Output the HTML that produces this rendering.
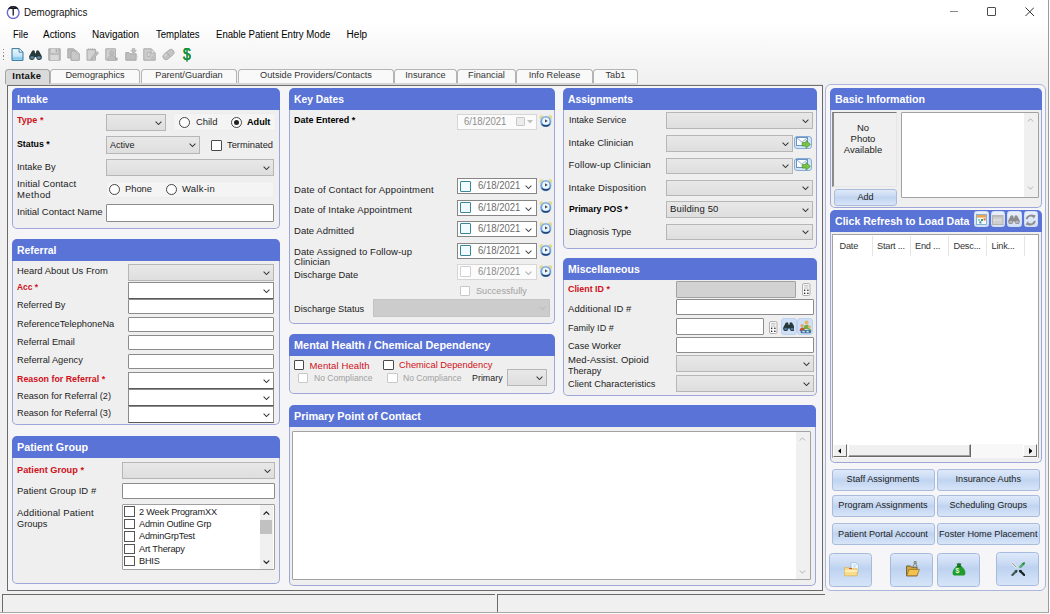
<!DOCTYPE html><html><head><meta charset="utf-8"><title>Demographics</title><style>
*{box-sizing:border-box;margin:0;padding:0}
html,body{width:1050px;height:614px;overflow:hidden;background:#f0f0f0}
body{position:relative;font-family:"Liberation Sans",sans-serif;font-size:9.5px;color:#1a1a1a}
.a{position:absolute}
.t{position:absolute;white-space:nowrap;line-height:12px;font-size:9.5px;color:#1c1c1c}
.b{font-weight:bold;color:#000;transform:scaleX(.94);transform-origin:0 50%}
.r{color:#d01020}
.g{color:#a0a0a0}
.pn{position:absolute;border-radius:5px;background:#efefef}
.pb{position:absolute;left:0;right:0;bottom:0;border:1px solid #9fa7d8;border-top:none;border-radius:0 0 5px 5px}
.ph{position:absolute;left:0;top:0;right:0;height:22px;border-radius:5px 5px 0 0;background:#5a73d6;color:#fff;font-weight:bold;font-size:11.5px;line-height:21px;padding-left:4.7px;white-space:nowrap}
.ph span{display:inline-block;transform:scaleX(.925);transform-origin:0 50%}
.cb{position:absolute;background:linear-gradient(#e8e8e8,#dedede);border:1px solid #b6b6b6}
.cb.w{background:#fff;border-color:#8c8c8c;border-bottom-color:#5a5a5a}
.cb.d{background:#cccccc;border-color:#c4c4c4}
.cb svg{position:absolute;right:3px;top:50%;margin-top:-1.5px}
.cb span{position:absolute;left:3px;top:50%;margin-top:-6px;line-height:12px;white-space:nowrap}
.tb{position:absolute;background:#fff;border:1px solid #8c8c8c;border-radius:1px}
.tb.d{background:#d2d2d2;border-color:#a2a2a2}
.ck{position:absolute;width:11px;height:11px;background:#fff;border:1px solid #4a4a4a;border-radius:1px}
.ck.d{border-color:#c8c8c8}
.rd{position:absolute;width:11px;height:11px;border-radius:50%;background:#fff;border:1px solid #444}
.rd i{position:absolute;left:2px;top:2px;width:5px;height:5px;border-radius:50%;background:#222}
.bt{position:absolute;border:1px solid #a9bcdd;border-radius:3px;background:linear-gradient(#dfe9fa 0%,#d0dff5 30%,#c0d4f0 50%,#cbdcf4 75%,#d8e5f8 100%);text-align:center;white-space:nowrap;color:#222;font-size:9.15px}
.gb{position:absolute;background:#f4f4f4;border:1px solid #ececec}
.dp{position:absolute;background:#fff;border:1px solid #868686}
.dp.d{background:#fbfbfb;border-color:#d6d6d6}
.dp .ck{left:2px;top:2px;border-color:#3a8798;background:#f0fcff}
.dp.d .ck{border-color:#d0d0d0;background:#fff}
.dp span{position:absolute;top:50%;margin-top:-6px;line-height:12px;font-size:10px;transform:scaleX(.953);transform-origin:0 50%;color:#6c6c6c;white-space:nowrap}
.dp.d span{color:#8e8e8e}
.dp svg{position:absolute;right:4px;top:50%;margin-top:-1px}
.tab{position:absolute;top:68.8px;height:14px;border:1px solid #b4b4b4;border-bottom:none;border-radius:3.5px 3.5px 0 0;background:#f9f9f9;text-align:center;font-size:9.2px;line-height:11.5px;color:#333;white-space:nowrap}
</style></head><body>
<div class="a" style="left:0;top:0;width:1050px;height:23px;background:#fff"></div>
<div class="t" style="left:24px;top:6.5px;font-size:10.4px;color:#111;transform:scaleX(.945);transform-origin:0 50%">Demographics</div>
<svg class="a" style="left:6px;top:4.5px" width="14.5" height="14.5" viewBox="0 0 14.5 14.5"><circle cx="7.2" cy="7.6" r="5.9" fill="#fff" stroke="#6a6bd2" stroke-width="1.4"/><path d="M2.6 3.9 A5.9 5.9 0 0 1 11.8 3.9" fill="none" stroke="#151515" stroke-width="1.5"/><path d="M4.2 3.4 H10.2 M7.2 3.4 V10.6" fill="none" stroke="#151515" stroke-width="1.3"/></svg>
<div class="a" style="left:950px;top:11px;width:8px;height:1px;background:#8c8c8c"></div>
<div class="a" style="left:987px;top:7px;width:9px;height:9px;border:1px solid #4c4c4c;border-radius:1px"></div>
<svg class="a" style="left:1024.5px;top:7px" width="9.5" height="9.5" viewBox="0 0 9.5 9.5"><path d="M0.5 0.5 L9 9 M9 0.5 L0.5 9" stroke="#333" stroke-width="1" fill="none"/></svg>
<div class="a" style="left:0;top:23px;width:1050px;height:62px;background:linear-gradient(#ffffff 0%,#f8f8f8 40%,#f0f0f0 95%)"></div>
<div class="t" style="left:12.5px;top:28.5px;font-size:10px;color:#000;transform:scaleX(0.944);transform-origin:0 50%">File</div>
<div class="t" style="left:43.3px;top:28.5px;font-size:10px;color:#000;transform:scaleX(0.994);transform-origin:0 50%">Actions</div>
<div class="t" style="left:92.2px;top:28.5px;font-size:10px;color:#000;transform:scaleX(0.994);transform-origin:0 50%">Navigation</div>
<div class="t" style="left:156.3px;top:28.5px;font-size:10px;color:#000;transform:scaleX(0.958);transform-origin:0 50%">Templates</div>
<div class="t" style="left:216px;top:28.5px;font-size:10px;color:#000;transform:scaleX(0.961);transform-origin:0 50%">Enable Patient Entry Mode</div>
<div class="t" style="left:346.6px;top:28.5px;font-size:10px;color:#000;transform:scaleX(1);transform-origin:0 50%">Help</div>
<div class="a" style="left:3px;top:48.5px;width:1px;height:1.4px;background:#8a8a8a"></div>
<div class="a" style="left:3px;top:51.9px;width:1px;height:1.4px;background:#8a8a8a"></div>
<div class="a" style="left:3px;top:55.3px;width:1px;height:1.4px;background:#8a8a8a"></div>
<div class="a" style="left:3px;top:58.7px;width:1px;height:1.4px;background:#8a8a8a"></div>
<svg class="a" style="left:10.5px;top:48px" width="13" height="13" viewBox="0 0 13 13"><defs><linearGradient id="nd" x1="0" y1="0" x2="0" y2="1"><stop offset="0" stop-color="#eef7fd"/><stop offset=".65" stop-color="#c4e4f8"/><stop offset=".8" stop-color="#7cc6ee"/><stop offset="1" stop-color="#bfe4f8"/></linearGradient></defs><path d="M1 0.6 H8.3 L12 4 V12.4 H1Z" fill="url(#nd)" stroke="#34789c" stroke-width="1"/><path d="M8.1 0.8 V4.2 H11.8" fill="#f4fbff" stroke="#256b8e" stroke-width=".8"/></svg>
<svg class="a" style="left:29px;top:49.5px" width="13" height="10" viewBox="0 0 13 10"><path d="M3 0.9 Q4.6 -0.2 5.7 1 L6.1 3.3 Q6.5 3 6.9 3.3 L7.3 1 Q8.4 -0.2 10 0.9 L12.7 6 Q13.5 9.9 10 9.9 Q7.4 9.9 7.2 7 L5.8 7 Q5.6 9.9 3 9.9 Q-0.5 9.9 0.3 6Z" fill="#28393b"/><ellipse cx="3.1" cy="7.6" rx="1.9" ry="1.3" fill="#5d88a8"/><ellipse cx="9.9" cy="7.6" rx="1.9" ry="1.3" fill="#5d88a8"/></svg>
<svg class="a" style="left:48px;top:48px" width="13" height="13" viewBox="0 0 13 13"><path d="M0.8 0.8 H12.2 V12.2 H0.8Z" fill="#bdbdbd" stroke="#a9a9a9"/><rect x="3" y="0.8" width="7" height="4" fill="#d6d6d6"/><rect x="7.6" y="1.2" width="1.6" height="2.8" fill="#a9a9a9"/><rect x="2.4" y="7" width="8.2" height="5" fill="#d9d9d9"/></svg>
<svg class="a" style="left:66.7px;top:48px" width="13" height="13" viewBox="0 0 13 13"><path d="M0.8 0.8 H6.5 L9 3 V10 H0.8Z" fill="#bdbdbd" stroke="#a9a9a9"/><path d="M4 3 H9.5 L12.3 5.6 V12.3 H4Z" fill="#c9c9c9" stroke="#a9a9a9"/><path d="M9.3 3.2 V5.8 H12" fill="#dcdcdc" stroke="#a9a9a9" stroke-width=".7"/></svg>
<svg class="a" style="left:85.7px;top:48px" width="13" height="13" viewBox="0 0 13 13"><path d="M1 1.4 H9.4 V12.2 H1Z" fill="#d2d2d2" stroke="#a9a9a9"/><path d="M2.5 0.4 V2.4 M4.5 0.4 V2.4 M6.5 0.4 V2.4 M8.2 0.4 V2.4" stroke="#a9a9a9" stroke-width=".8"/><path d="M5.4 9.8 L10.8 3.4 L12.6 5 L7.2 11.2 L4.9 12Z" fill="#bdbdbd" stroke="#a9a9a9" stroke-width=".7"/></svg>
<svg class="a" style="left:105px;top:48px" width="13" height="13" viewBox="0 0 13 13"><path d="M0.8 0.8 H10.4 V12 H0.8Z" fill="#cfcfcf" stroke="#a9a9a9"/><circle cx="6.8" cy="5" r="2.3" fill="#bdbdbd" stroke="#a9a9a9" stroke-width=".6"/><path d="M2.6 12.4 Q3 7.6 6.8 7.6 Q10.8 7.6 11.2 12.4Z" fill="#bdbdbd" stroke="#a9a9a9" stroke-width=".6"/><rect x="10.2" y="9.6" width="2.4" height="2.8" fill="#a9a9a9"/></svg>
<svg class="a" style="left:124.5px;top:48px" width="13" height="13" viewBox="0 0 13 13"><path d="M0.8 12.2 V4.6 H4 L5 5.8 H11.2 V12.2Z" fill="#bdbdbd" stroke="#a9a9a9"/><path d="M7.4 0.4 H9.8 V2.4 H11.4 L8.6 5.4 L5.8 2.4 H7.4Z" fill="#bdbdbd" stroke="#a9a9a9" stroke-width=".6"/><path d="M11.2 7 L12.8 8.6 L11.2 12.2Z" fill="#c9c9c9"/></svg>
<svg class="a" style="left:143px;top:48px" width="13" height="13" viewBox="0 0 13 13"><path d="M0.8 0.8 H8.4 L12.2 5 V12.2 H0.8Z" fill="#cdcdcd" stroke="#a9a9a9"/><path d="M8.2 1 V5.2 H12" fill="#dedede" stroke="#a9a9a9" stroke-width=".7"/><path d="M4.2 4.4 H7 V8.6 H4.2Z" fill="#dadada" stroke="#a9a9a9" stroke-width=".7"/><path d="M7.2 11.6 L10 6.6 L11.6 12Z" fill="#bdbdbd"/></svg>
<svg class="a" style="left:162px;top:48px" width="13" height="13" viewBox="0 0 13 13"><g transform="rotate(-40 6.5 6.5)"><rect x="0.2" y="3.4" width="12.6" height="6.2" rx="3.1" fill="#c4c4c4" stroke="#a9a9a9" stroke-width=".8"/><path d="M6.5 3.4 V9.6" stroke="#a9a9a9" stroke-width=".8"/><path d="M2 4.9 H5.4" stroke="#dcdcdc" stroke-width="1"/></g></svg>
<div class="t" style="left:183.2px;top:46.8px;font-size:15.8px;line-height:16px;color:#139a36;text-shadow:0 0 .7px #0b6a22,0 0 .3px #0b6a22;transform:scaleX(.88);transform-origin:0 50%">$</div>
<div class="a" style="left:6px;top:82.5px;width:632px;height:2.5px;background:#d6d6d6"></div>
<div class="a" style="left:638px;top:83.5px;width:185px;height:1.5px;background:#e2e2e2"></div>
<div class="tab" style="left:50px;width:90px">Demographics</div>
<div class="tab" style="left:141px;width:96px">Parent/Guardian</div>
<div class="tab" style="left:238px;width:156px">Outside Providers/Contacts</div>
<div class="tab" style="left:394px;width:63px">Insurance</div>
<div class="tab" style="left:457px;width:59px">Financial</div>
<div class="tab" style="left:516px;width:77px">Info Release</div>
<div class="tab" style="left:593px;width:45px">Tab1</div>
<div class="a" style="left:7px;top:85px;width:815.5px;height:506px;border:1px solid #6a6a6a;border-top:1px solid #6e6e6e;background:#f5f5f7"></div>
<div class="tab" style="left:5px;width:45px;top:68.5px;height:15.5px;background:#dadada;font-weight:bold;font-size:9.5px;letter-spacing:.25px;color:#111;line-height:11.5px;border-color:#a4a4a4;padding-right:1.5px">Intake</div>
<div class="pn" style="left:12px;top:88px;width:268px;height:141px"><div class="ph" style="height:22px;line-height:23px"><span style="transform:scaleX(0.93)">Intake</span></div><div class="pb" style="top:22px"></div>
</div>
<div class="t b r" style="left:17px;top:114px;transform:scaleX(0.9495);transform-origin:0 50%;">Type *</div>
<div class="t b" style="left:17px;top:138px;transform:scaleX(0.9245);transform-origin:0 50%;">Status *</div>
<div class="t " style="left:17px;top:161px;transform:scaleX(0.9746);transform-origin:0 50%;">Intake By</div>
<div class="t " style="left:17px;top:178px;letter-spacing:0.117px;transform:none;">Initial Contact</div>
<div class="t " style="left:17px;top:189px;letter-spacing:0.383px;transform:none;">Method</div>
<div class="t " style="left:17px;top:206px;letter-spacing:0.003px;transform:none;">Initial Contact Name</div>
<div class="cb " style="left:106px;top:114px;width:60px;height:17px"><svg width="7" height="4.4" viewBox="0 0 8 5"><path d="M0.7 0.7 L4 4 L7.3 0.7" fill="none" stroke="#333" stroke-width="1.15"/></svg></div>
<div class="gb" style="left:173px;top:113px;width:103px;height:18px"></div>
<div class="rd" style="left:179.0px;top:116.5px"></div>
<div class="t " style="left:196px;top:116px;transform:scaleX(0.9885);transform-origin:0 50%;">Child</div>
<div class="rd" style="left:230.5px;top:116.5px"><i></i></div>
<div class="t b" style="left:246.5px;top:116px;transform:scaleX(0.9642);transform-origin:0 50%;">Adult</div>
<div class="cb " style="left:106px;top:136px;width:93.5px;height:17.5px"><span style="transform:scaleX(0.9432);transform-origin:0 50%;">Active</span><svg width="7" height="4.4" viewBox="0 0 8 5"><path d="M0.7 0.7 L4 4 L7.3 0.7" fill="none" stroke="#333" stroke-width="1.15"/></svg></div>
<div class="ck " style="left:211px;top:139.5px;width:11px;height:11px"></div>
<div class="t " style="left:226.5px;top:139px;transform:scaleX(0.9788);transform-origin:0 50%;">Terminated</div>
<div class="cb " style="left:106px;top:159px;width:168px;height:17px"><svg width="7" height="4.4" viewBox="0 0 8 5"><path d="M0.7 0.7 L4 4 L7.3 0.7" fill="none" stroke="#333" stroke-width="1.15"/></svg></div>
<div class="gb" style="left:106px;top:181px;width:168px;height:17px"></div>
<div class="rd" style="left:108.5px;top:183.5px"></div>
<div class="t " style="left:125px;top:183px;transform:scaleX(0.9829);transform-origin:0 50%;">Phone</div>
<div class="rd" style="left:166.0px;top:183.5px"></div>
<div class="t " style="left:182px;top:183px;letter-spacing:0.231px;transform:none;">Walk-in</div>
<div class="tb " style="left:106px;top:204px;width:168px;height:18px"></div>
<div class="pn" style="left:12px;top:239px;width:268px;height:186px"><div class="ph" style="height:22px;line-height:23px"><span style="transform:scaleX(0.906)">Referral</span></div><div class="pb" style="top:22px"></div>
</div>
<div class="t " style="left:17px;top:264.5px;transform:scaleX(0.9882);transform-origin:0 50%;">Heard About Us From</div>
<div class="cb " style="left:128px;top:264px;width:146px;height:17px"><svg width="7" height="4.4" viewBox="0 0 8 5"><path d="M0.7 0.7 L4 4 L7.3 0.7" fill="none" stroke="#333" stroke-width="1.15"/></svg></div>
<div class="t b r" style="left:17px;top:281.2px;transform:scaleX(0.8837);transform-origin:0 50%;">Acc *</div>
<div class="cb w" style="left:128px;top:282px;width:146px;height:17px"><svg width="7" height="4.4" viewBox="0 0 8 5"><path d="M0.7 0.7 L4 4 L7.3 0.7" fill="none" stroke="#333" stroke-width="1.15"/></svg></div>
<div class="t " style="left:17px;top:299.4px;transform:scaleX(0.9529);transform-origin:0 50%;">Referred By</div>
<div class="tb " style="left:128px;top:299px;width:146px;height:15px"></div>
<div class="t " style="left:17px;top:317.7px;transform:scaleX(0.9738);transform-origin:0 50%;">ReferenceTelephoneNa</div>
<div class="tb " style="left:128px;top:317px;width:146px;height:15px"></div>
<div class="t " style="left:17px;top:336.3px;transform:scaleX(0.9588);transform-origin:0 50%;">Referral Email</div>
<div class="tb " style="left:128px;top:335px;width:146px;height:15px"></div>
<div class="t " style="left:17px;top:353.8px;transform:scaleX(0.9734);transform-origin:0 50%;">Referral Agency</div>
<div class="tb " style="left:128px;top:354px;width:146px;height:15px"></div>
<div class="t b r" style="left:17px;top:372.8px;transform:scaleX(0.9322);transform-origin:0 50%;">Reason for Referral *</div>
<div class="cb w" style="left:128px;top:372px;width:146px;height:17px"><svg width="7" height="4.4" viewBox="0 0 8 5"><path d="M0.7 0.7 L4 4 L7.3 0.7" fill="none" stroke="#333" stroke-width="1.15"/></svg></div>
<div class="t " style="left:17px;top:390.2px;transform:scaleX(0.9676);transform-origin:0 50%;">Reason for Referral (2)</div>
<div class="cb w" style="left:128px;top:389px;width:146px;height:17px"><svg width="7" height="4.4" viewBox="0 0 8 5"><path d="M0.7 0.7 L4 4 L7.3 0.7" fill="none" stroke="#333" stroke-width="1.15"/></svg></div>
<div class="t " style="left:17px;top:407.3px;transform:scaleX(0.9676);transform-origin:0 50%;">Reason for Referral (3)</div>
<div class="cb w" style="left:128px;top:406px;width:146px;height:17px"><svg width="7" height="4.4" viewBox="0 0 8 5"><path d="M0.7 0.7 L4 4 L7.3 0.7" fill="none" stroke="#333" stroke-width="1.15"/></svg></div>
<div class="pn" style="left:12px;top:436px;width:268px;height:148px"><div class="ph" style="height:22px;line-height:23px"><span style="transform:scaleX(0.935)">Patient Group</span></div><div class="pb" style="top:22px"></div>
</div>
<div class="t b r" style="left:17px;top:464px;transform:scaleX(0.9690);transform-origin:0 50%;">Patient Group *</div>
<div class="t " style="left:17px;top:485px;letter-spacing:0.031px;transform:none;">Patient Group ID #</div>
<div class="t " style="left:17px;top:507px;letter-spacing:0.162px;transform:none;">Additional Patient</div>
<div class="t " style="left:17px;top:518px;transform:scaleX(0.9726);transform-origin:0 50%;">Groups</div>
<div class="cb " style="left:121.5px;top:462px;width:153px;height:17px"><svg width="7" height="4.4" viewBox="0 0 8 5"><path d="M0.7 0.7 L4 4 L7.3 0.7" fill="none" stroke="#333" stroke-width="1.15"/></svg></div>
<div class="tb " style="left:121.5px;top:483px;width:153px;height:16px"></div>
<div class="tb" style="left:121.5px;top:504px;width:153px;height:66px;border-color:#a0a0a0"></div>
<div class="ck" style="left:124px;top:506.3px;width:10.5px;height:10.5px;border-radius:0;border-color:#555"></div>
<div class="t " style="left:139px;top:505.5px;font-size:9.2px;letter-spacing:-0.2px">2 Week ProgramXX</div>
<div class="ck" style="left:124px;top:518.6999999999999px;width:10.5px;height:10.5px;border-radius:0;border-color:#555"></div>
<div class="t " style="left:139px;top:517.9px;font-size:9.2px;letter-spacing:-0.2px">Admin Outline Grp</div>
<div class="ck" style="left:124px;top:531.0999999999999px;width:10.5px;height:10.5px;border-radius:0;border-color:#555"></div>
<div class="t " style="left:139px;top:530.3px;font-size:9.2px;letter-spacing:-0.2px">AdminGrpTest</div>
<div class="ck" style="left:124px;top:543.5px;width:10.5px;height:10.5px;border-radius:0;border-color:#555"></div>
<div class="t " style="left:139px;top:542.7px;font-size:9.2px;letter-spacing:-0.2px">Art Therapy</div>
<div class="ck" style="left:124px;top:555.9px;width:10.5px;height:10.5px;border-radius:0;border-color:#555"></div>
<div class="t " style="left:139px;top:555.1px;font-size:9.2px;letter-spacing:-0.2px">BHIS</div>
<div class="a" style="left:260px;top:505px;width:13px;height:64px;background:#f0f0f0"></div>
<div class="a" style="left:260px;top:520px;width:12px;height:14px;background:#c1c1c1"></div>
<svg class="a" style="left:263px;top:510.5px" width="6.8" height="4.3" viewBox="0 0 8 5"><path d="M0.7 4.3 L4 1 L7.3 4.3" fill="none" stroke="#222" stroke-width="1.4"/></svg>
<svg class="a" style="left:263px;top:559.5px" width="6.8" height="4.3" viewBox="0 0 8 5"><path d="M0.7 0.7 L4 4 L7.3 0.7" fill="none" stroke="#222" stroke-width="1.4"/></svg>
<div class="pn" style="left:289px;top:88px;width:266px;height:236px"><div class="ph" style="height:22px;line-height:23px"><span style="transform:scaleX(0.9)">Key Dates</span></div><div class="pb" style="top:22px"></div>
</div>
<div class="t b" style="left:294px;top:114px;transform:scaleX(0.9440);transform-origin:0 50%;">Date Entered *</div>
<div class="dp d" style="left:457px;top:113.5px;width:80px;height:16.0px"><span style="left:6px">6/18/2021</span></div>
<svg class="a" style="left:538.7px;top:114.5px" width="13.6" height="12.6" viewBox="0 0 13.6 12.6"><circle cx="2.7" cy="2.4" r="2.2" fill="#e6da86"/><circle cx="10.9" cy="2.4" r="2.2" fill="#e6da86"/><circle cx="6.8" cy="6.6" r="5.8" fill="#a9c9ec"/><circle cx="6.8" cy="6.6" r="5.2" fill="#6f9fd8"/><path d="M2 8.6 A5.2 5.2 0 0 0 11.6 8.6 A6 4.4 0 0 1 2 8.6Z" fill="#1f3f70"/><circle cx="6.8" cy="6.2" r="3.6" fill="#ecf9ff"/><path d="M6 4.3 L8.8 6 L6 7.6Z" fill="#54424e"/></svg>
<div class="a" style="left:516px;top:117px;width:9px;height:9px;border:1px solid #c8c8c8;border-radius:1px;background:#ececec"></div>
<svg class="a" style="left:527px;top:120px" width="6" height="4" viewBox="0 0 6 4"><path d="M0 0 H6 L3 3.5Z" fill="#c0c0c0"/></svg>
<div class="t " style="left:294px;top:183.5px;letter-spacing:0.150px;transform:none;">Date of Contact for Appointment</div>
<div class="dp" style="left:457px;top:178px;width:80px;height:16px"><div class="ck" style="top:1.5px"></div><span style="left:20px">6/18/2021</span><svg width="7" height="4.4" viewBox="0 0 8 5"><path d="M0.7 0.7 L4 4 L7.3 0.7" fill="none" stroke="#444" stroke-width="1.15"/></svg></div>
<svg class="a" style="left:538.7px;top:179.0px" width="13.6" height="12.6" viewBox="0 0 13.6 12.6"><circle cx="2.7" cy="2.4" r="2.2" fill="#e6da86"/><circle cx="10.9" cy="2.4" r="2.2" fill="#e6da86"/><circle cx="6.8" cy="6.6" r="5.8" fill="#a9c9ec"/><circle cx="6.8" cy="6.6" r="5.2" fill="#6f9fd8"/><path d="M2 8.6 A5.2 5.2 0 0 0 11.6 8.6 A6 4.4 0 0 1 2 8.6Z" fill="#1f3f70"/><circle cx="6.8" cy="6.2" r="3.6" fill="#ecf9ff"/><path d="M6 4.3 L8.8 6 L6 7.6Z" fill="#54424e"/></svg>
<div class="t " style="left:294px;top:203.5px;letter-spacing:0.135px;transform:none;">Date of Intake Appointment</div>
<div class="dp" style="left:457px;top:199.5px;width:80px;height:16.0px"><div class="ck" style="top:1.5px"></div><span style="left:20px">6/18/2021</span><svg width="7" height="4.4" viewBox="0 0 8 5"><path d="M0.7 0.7 L4 4 L7.3 0.7" fill="none" stroke="#444" stroke-width="1.15"/></svg></div>
<svg class="a" style="left:538.7px;top:200.5px" width="13.6" height="12.6" viewBox="0 0 13.6 12.6"><circle cx="2.7" cy="2.4" r="2.2" fill="#e6da86"/><circle cx="10.9" cy="2.4" r="2.2" fill="#e6da86"/><circle cx="6.8" cy="6.6" r="5.8" fill="#a9c9ec"/><circle cx="6.8" cy="6.6" r="5.2" fill="#6f9fd8"/><path d="M2 8.6 A5.2 5.2 0 0 0 11.6 8.6 A6 4.4 0 0 1 2 8.6Z" fill="#1f3f70"/><circle cx="6.8" cy="6.2" r="3.6" fill="#ecf9ff"/><path d="M6 4.3 L8.8 6 L6 7.6Z" fill="#54424e"/></svg>
<div class="t " style="left:294px;top:224.5px;letter-spacing:0.025px;transform:none;">Date Admitted</div>
<div class="dp" style="left:457px;top:221px;width:80px;height:15.5px"><div class="ck" style="top:1.25px"></div><span style="left:20px">6/18/2021</span><svg width="7" height="4.4" viewBox="0 0 8 5"><path d="M0.7 0.7 L4 4 L7.3 0.7" fill="none" stroke="#444" stroke-width="1.15"/></svg></div>
<svg class="a" style="left:538.7px;top:221.75px" width="13.6" height="12.6" viewBox="0 0 13.6 12.6"><circle cx="2.7" cy="2.4" r="2.2" fill="#e6da86"/><circle cx="10.9" cy="2.4" r="2.2" fill="#e6da86"/><circle cx="6.8" cy="6.6" r="5.8" fill="#a9c9ec"/><circle cx="6.8" cy="6.6" r="5.2" fill="#6f9fd8"/><path d="M2 8.6 A5.2 5.2 0 0 0 11.6 8.6 A6 4.4 0 0 1 2 8.6Z" fill="#1f3f70"/><circle cx="6.8" cy="6.2" r="3.6" fill="#ecf9ff"/><path d="M6 4.3 L8.8 6 L6 7.6Z" fill="#54424e"/></svg>
<div class="t " style="left:294px;top:245.5px;letter-spacing:0.093px;transform:none;">Date Assigned to Follow-up</div>
<div class="dp" style="left:457px;top:242.5px;width:80px;height:16.0px"><div class="ck" style="top:1.5px"></div><span style="left:20px">6/18/2021</span><svg width="7" height="4.4" viewBox="0 0 8 5"><path d="M0.7 0.7 L4 4 L7.3 0.7" fill="none" stroke="#444" stroke-width="1.15"/></svg></div>
<svg class="a" style="left:538.7px;top:243.5px" width="13.6" height="12.6" viewBox="0 0 13.6 12.6"><circle cx="2.7" cy="2.4" r="2.2" fill="#e6da86"/><circle cx="10.9" cy="2.4" r="2.2" fill="#e6da86"/><circle cx="6.8" cy="6.6" r="5.8" fill="#a9c9ec"/><circle cx="6.8" cy="6.6" r="5.2" fill="#6f9fd8"/><path d="M2 8.6 A5.2 5.2 0 0 0 11.6 8.6 A6 4.4 0 0 1 2 8.6Z" fill="#1f3f70"/><circle cx="6.8" cy="6.2" r="3.6" fill="#ecf9ff"/><path d="M6 4.3 L8.8 6 L6 7.6Z" fill="#54424e"/></svg>
<div class="t " style="left:294px;top:268.5px;transform:scaleX(0.9790);transform-origin:0 50%;">Discharge Date</div>
<div class="dp d" style="left:457px;top:264px;width:80px;height:15.5px"><div class="ck" style="top:1.25px"></div><span style="left:20px">6/18/2021</span><svg width="7" height="4.4" viewBox="0 0 8 5"><path d="M0.7 0.7 L4 4 L7.3 0.7" fill="none" stroke="#aaa" stroke-width="1.15"/></svg></div>
<svg class="a" style="left:538.7px;top:264.75px" width="13.6" height="12.6" viewBox="0 0 13.6 12.6"><circle cx="2.7" cy="2.4" r="2.2" fill="#e6da86"/><circle cx="10.9" cy="2.4" r="2.2" fill="#e6da86"/><circle cx="6.8" cy="6.6" r="5.8" fill="#a9c9ec"/><circle cx="6.8" cy="6.6" r="5.2" fill="#6f9fd8"/><path d="M2 8.6 A5.2 5.2 0 0 0 11.6 8.6 A6 4.4 0 0 1 2 8.6Z" fill="#1f3f70"/><circle cx="6.8" cy="6.2" r="3.6" fill="#ecf9ff"/><path d="M6 4.3 L8.8 6 L6 7.6Z" fill="#54424e"/></svg>
<div class="t " style="left:294px;top:256px;letter-spacing:0.012px;transform:none;">Clinician</div>
<div class="ck d" style="left:460px;top:286px;width:10px;height:10px"></div>
<div class="t g" style="left:475.5px;top:285px;transform:scaleX(0.9622);transform-origin:0 50%;">Successfully</div>
<div class="t " style="left:294px;top:302.5px;transform:scaleX(0.9704);transform-origin:0 50%;">Discharge Status</div>
<div class="cb d" style="left:373px;top:299px;width:177px;height:17.5px"><svg width="7" height="4.4" viewBox="0 0 8 5"><path d="M0.7 0.7 L4 4 L7.3 0.7" fill="none" stroke="#bdbdbd" stroke-width="1.15"/></svg></div>
<div class="pn" style="left:289px;top:334px;width:266px;height:60px"><div class="ph" style="height:22px;line-height:23px"><span style="transform:scaleX(0.948)">Mental Health / Chemical Dependency</span></div><div class="pb" style="top:22px"></div>
</div>
<div class="ck " style="left:293.5px;top:359.5px;width:10.5px;height:10.5px"></div>
<div class="t r" style="left:309.5px;top:359.5px;letter-spacing:0.115px;transform:none;">Mental Health</div>
<div class="ck " style="left:383px;top:359.5px;width:10.5px;height:10.5px"></div>
<div class="t r" style="left:398.5px;top:359px;transform:scaleX(0.9782);transform-origin:0 50%;">Chemical Dependency</div>
<div class="ck d" style="left:297.5px;top:372.5px;width:10.5px;height:10.5px"></div>
<div class="t g" style="left:313.5px;top:371.5px;transform:scaleX(0.8992);transform-origin:0 50%;">No Compliance</div>
<div class="ck d" style="left:387px;top:372.5px;width:10.5px;height:10.5px"></div>
<div class="t g" style="left:403px;top:371.5px;transform:scaleX(0.8992);transform-origin:0 50%;">No Compliance</div>
<div class="t " style="left:471.5px;top:372px;transform:scaleX(0.9352);transform-origin:0 50%;">Primary</div>
<div class="cb " style="left:507px;top:369px;width:40px;height:17px"><svg width="7" height="4.4" viewBox="0 0 8 5"><path d="M0.7 0.7 L4 4 L7.3 0.7" fill="none" stroke="#333" stroke-width="1.15"/></svg></div>
<div class="pn" style="left:289px;top:405px;width:527px;height:181px"><div class="ph" style="height:22px;line-height:23px"><span style="transform:scaleX(0.941)">Primary Point of Contact</span></div><div class="pb" style="top:22px"></div>
</div>
<div class="tb" style="left:291.5px;top:431px;width:519px;height:149px;border-color:#a2a2a2"></div>
<div class="a" style="left:796px;top:432px;width:13.5px;height:147px;background:#f0f0f0"></div>
<svg class="a" style="left:799px;top:437px" width="7" height="4" viewBox="0 0 8 5"><path d="M0.7 4.3 L4 1 L7.3 4.3" fill="none" stroke="#b0b0b0" stroke-width="1.2"/></svg>
<svg class="a" style="left:799px;top:570px" width="7" height="4" viewBox="0 0 8 5"><path d="M0.7 0.7 L4 4 L7.3 0.7" fill="none" stroke="#b0b0b0" stroke-width="1.2"/></svg>
<div class="pn" style="left:563px;top:88px;width:254px;height:161px"><div class="ph" style="height:22px;line-height:23px"><span style="transform:scaleX(0.9)">Assignments</span></div><div class="pb" style="top:22px"></div>
</div>
<div class="t " style="left:568.5px;top:114px;transform:scaleX(0.9536);transform-origin:0 50%;">Intake Service</div>
<div class="cb " style="left:666px;top:112px;width:146.5px;height:16.5px"><svg width="7" height="4.4" viewBox="0 0 8 5"><path d="M0.7 0.7 L4 4 L7.3 0.7" fill="none" stroke="#333" stroke-width="1.15"/></svg></div>
<div class="t " style="left:568.5px;top:137px;letter-spacing:0.025px;transform:none;">Intake Clinician</div>
<div class="cb " style="left:666px;top:135px;width:126.5px;height:16.5px"><svg width="7" height="4.4" viewBox="0 0 8 5"><path d="M0.7 0.7 L4 4 L7.3 0.7" fill="none" stroke="#333" stroke-width="1.15"/></svg></div>
<div class="t " style="left:568.5px;top:159.2px;letter-spacing:0.149px;transform:none;">Follow-up Clinician</div>
<div class="cb " style="left:666px;top:157.5px;width:126.5px;height:16.0px"><svg width="7" height="4.4" viewBox="0 0 8 5"><path d="M0.7 0.7 L4 4 L7.3 0.7" fill="none" stroke="#333" stroke-width="1.15"/></svg></div>
<div class="t " style="left:568.5px;top:181.6px;letter-spacing:0.148px;transform:none;">Intake Disposition</div>
<div class="cb " style="left:666px;top:179.5px;width:146.5px;height:16.5px"><svg width="7" height="4.4" viewBox="0 0 8 5"><path d="M0.7 0.7 L4 4 L7.3 0.7" fill="none" stroke="#333" stroke-width="1.15"/></svg></div>
<div class="t b" style="left:568.5px;top:203px;transform:scaleX(0.9158);transform-origin:0 50%;">Primary POS *</div>
<div class="cb " style="left:666px;top:201px;width:146.5px;height:16.5px"><span style="letter-spacing:0.139px;transform:none;">Building 50</span><svg width="7" height="4.4" viewBox="0 0 8 5"><path d="M0.7 0.7 L4 4 L7.3 0.7" fill="none" stroke="#333" stroke-width="1.15"/></svg></div>
<div class="t " style="left:568.5px;top:225.6px;transform:scaleX(0.9623);transform-origin:0 50%;">Diagnosis Type</div>
<div class="cb " style="left:666px;top:223.5px;width:146.5px;height:16.5px"><svg width="7" height="4.4" viewBox="0 0 8 5"><path d="M0.7 0.7 L4 4 L7.3 0.7" fill="none" stroke="#333" stroke-width="1.15"/></svg></div>
<div class="bt" style="left:794px;top:135.5px;width:18px;height:13.5px;background:#d3e6f9;border-color:#86acd9;border-radius:3px"></div>
<svg class="a" style="left:796px;top:137.0px" width="15" height="11.5" viewBox="0 0 15 11.5"><rect x="0.5" y="0.5" width="11" height="8" fill="#fbfdff" stroke="#6288b8" stroke-width=".9"/><path d="M0.7 0.8 L6 5.2 L11.3 0.8" fill="none" stroke="#7d9cc4" stroke-width=".8"/><path d="M6.2 5.6 H10 V3.4 L14.4 7.4 L10 11.2 V9 H6.2Z" fill="#7cc445" stroke="#3f8f2e" stroke-width=".7"/></svg>
<div class="bt" style="left:794px;top:157.5px;width:18px;height:13.5px;background:#d3e6f9;border-color:#86acd9;border-radius:3px"></div>
<svg class="a" style="left:796px;top:159.0px" width="15" height="11.5" viewBox="0 0 15 11.5"><rect x="0.5" y="0.5" width="11" height="8" fill="#fbfdff" stroke="#6288b8" stroke-width=".9"/><path d="M0.7 0.8 L6 5.2 L11.3 0.8" fill="none" stroke="#7d9cc4" stroke-width=".8"/><path d="M6.2 5.6 H10 V3.4 L14.4 7.4 L10 11.2 V9 H6.2Z" fill="#7cc445" stroke="#3f8f2e" stroke-width=".7"/></svg>
<div class="pn" style="left:563px;top:258px;width:254px;height:138px"><div class="ph" style="height:22px;line-height:23px"><span style="transform:scaleX(0.913)">Miscellaneous</span></div><div class="pb" style="top:22px"></div>
</div>
<div class="t b r" style="left:568px;top:283px;transform:scaleX(0.9339);transform-origin:0 50%;">Client ID *</div>
<div class="t " style="left:568px;top:302.5px;letter-spacing:0.115px;transform:none;">Additional ID #</div>
<div class="t " style="left:568px;top:321.5px;transform:scaleX(0.9514);transform-origin:0 50%;">Family ID #</div>
<div class="t " style="left:568px;top:340px;transform:scaleX(0.9592);transform-origin:0 50%;">Case Worker</div>
<div class="t " style="left:568px;top:353.5px;letter-spacing:0.058px;transform:none;">Med-Assist. Opioid</div>
<div class="t " style="left:568px;top:364.5px;transform:scaleX(0.9526);transform-origin:0 50%;">Therapy</div>
<div class="t " style="left:568px;top:377.5px;transform:scaleX(0.9749);transform-origin:0 50%;">Client Characteristics</div>
<div class="tb d" style="left:676px;top:281px;width:120px;height:16.5px"></div>
<div class="tb " style="left:676px;top:299px;width:138px;height:16px"></div>
<div class="tb " style="left:676px;top:318px;width:88px;height:16.5px"></div>
<div class="tb " style="left:676px;top:337px;width:138px;height:16px"></div>
<div class="cb " style="left:676px;top:355px;width:138px;height:16.5px"><svg width="7" height="4.4" viewBox="0 0 8 5"><path d="M0.7 0.7 L4 4 L7.3 0.7" fill="none" stroke="#333" stroke-width="1.15"/></svg></div>
<div class="cb " style="left:676px;top:374.5px;width:138px;height:17px"><svg width="7" height="4.4" viewBox="0 0 8 5"><path d="M0.7 0.7 L4 4 L7.3 0.7" fill="none" stroke="#333" stroke-width="1.15"/></svg></div>
<svg class="a" style="left:802px;top:283px" width="8.5" height="13" viewBox="0 0 8.5 13"><rect x="0.5" y="0.5" width="7.5" height="12" rx="1.5" fill="#fcfcfc" stroke="#a8a8a8" stroke-width=".9"/><path d="M2 2.4 H6.5 M2 4 H6.5" stroke="#b8b8b8" stroke-width=".8"/><path d="M2 5.4 H6.5" stroke="#c4c4c4" stroke-width=".7"/><g fill="#222"><rect x="2" y="6.6" width="1.3" height="1.4"/><rect x="5.2" y="6.6" width="1.3" height="1.4"/><rect x="2" y="9.6" width="1.3" height="1.4"/><rect x="5.2" y="9.6" width="1.3" height="1.4"/></g></svg>
<svg class="a" style="left:769px;top:320.5px" width="8.5" height="13" viewBox="0 0 8.5 13"><rect x="0.5" y="0.5" width="7.5" height="12" rx="1.5" fill="#fcfcfc" stroke="#a8a8a8" stroke-width=".9"/><path d="M2 2.4 H6.5 M2 4 H6.5" stroke="#b8b8b8" stroke-width=".8"/><path d="M2 5.4 H6.5" stroke="#c4c4c4" stroke-width=".7"/><g fill="#222"><rect x="2" y="6.6" width="1.3" height="1.4"/><rect x="5.2" y="6.6" width="1.3" height="1.4"/><rect x="2" y="9.6" width="1.3" height="1.4"/><rect x="5.2" y="9.6" width="1.3" height="1.4"/></g></svg>
<div class="a" style="left:780.5px;top:318px;width:16px;height:16.5px;border-radius:3px;background:#cfe0f6;border:1px solid #bcd2ef"></div>
<svg class="a" style="left:782.5px;top:321.5px" width="11.96" height="9.200000000000001" viewBox="0 0 13 10"><path d="M3 0.9 Q4.6 -0.2 5.7 1 L6.1 3.3 Q6.5 3 6.9 3.3 L7.3 1 Q8.4 -0.2 10 0.9 L12.7 6 Q13.5 9.9 10 9.9 Q7.4 9.9 7.2 7 L5.8 7 Q5.6 9.9 3 9.9 Q-0.5 9.9 0.3 6Z" fill="#27373a"/><ellipse cx="3.1" cy="7.6" rx="1.9" ry="1.3" fill="#4d7597"/><ellipse cx="9.9" cy="7.6" rx="1.9" ry="1.3" fill="#4d7597"/></svg>
<div class="a" style="left:797px;top:318px;width:16px;height:16.5px;border-radius:3px;background:#cfe0f6;border:1px solid #bcd2ef"></div>
<svg class="a" style="left:798.5px;top:319.5px" width="13" height="14" viewBox="0 0 13 14"><circle cx="7.6" cy="2.6" r="2" fill="#e9b45c"/><path d="M4.6 9 Q4.8 4.8 7.6 4.8 Q10.6 4.8 10.8 9Z" fill="#6fb04a"/><circle cx="3.2" cy="5.6" r="1.7" fill="#e2a866"/><path d="M0.6 11 Q0.8 7.4 3.2 7.4 Q5.8 7.4 6 11Z" fill="#c8552e"/><circle cx="10.4" cy="7" r="1.5" fill="#e9b45c"/><path d="M8.2 11.4 Q8.4 8.6 10.4 8.6 Q12.4 8.6 12.6 11.4Z" fill="#7fb85c"/><rect x="1.6" y="10" width="10.4" height="3.2" rx="1.2" fill="#3f6f9f"/><rect x="3.4" y="10.8" width="2.4" height="1.6" fill="#cfe0f0"/><rect x="7.4" y="10.8" width="2.4" height="1.6" fill="#cfe0f0"/></svg>
<div class="a" style="left:825px;top:84px;width:221px;height:507px;border:1px solid #acb5da;border-radius:6px;background:#f6f6f9"></div>
<div class="pn" style="left:830px;top:88px;width:212px;height:120px"><div class="ph" style="height:22px;line-height:23px"><span style="transform:scaleX(0.927)">Basic Information</span></div><div class="pb" style="top:22px"></div>
</div>
<div class="a" style="left:832px;top:112px;width:65px;height:75px;background:#f0f0f0;border:1px solid #e6e6e6;border-top:1px solid #7a7a7a;border-left:2px solid #8a8a8a"></div>
<div class="t" style="left:832px;width:62px;text-align:center;top:122px">No</div>
<div class="t" style="left:832px;width:62px;text-align:center;top:133px">Photo</div>
<div class="t" style="left:832px;width:62px;text-align:center;top:144px">Available</div>
<div class="bt" style="left:834px;top:189px;width:63px;height:17px;line-height:15px">Add</div>
<div class="tb" style="left:901px;top:111.5px;width:137.5px;height:86px;border-color:#a2a2a2"></div>
<div class="a" style="left:1024px;top:112.5px;width:13.5px;height:84px;background:#f0f0f0"></div>
<svg class="a" style="left:1027px;top:118px" width="7" height="4" viewBox="0 0 8 5"><path d="M0.7 4.3 L4 1 L7.3 4.3" fill="none" stroke="#b0b0b0" stroke-width="1.2"/></svg>
<svg class="a" style="left:1027px;top:186px" width="7" height="4" viewBox="0 0 8 5"><path d="M0.7 0.7 L4 4 L7.3 0.7" fill="none" stroke="#b0b0b0" stroke-width="1.2"/></svg>
<div class="pn" style="left:830px;top:210px;width:212px;height:253px"><div class="ph" style="height:22px;line-height:23px"><span style="transform:scaleX(0.919)">Click Refresh to Load Data</span></div><div class="pb" style="top:22px"></div>
</div>
<div class="a" style="left:832px;top:234px;width:206.5px;height:224px;background:#fff;border:1px solid #a2a2a2"></div>
<div class="t " style="left:839.5px;top:240px;font-size:9.2px;letter-spacing:-0.2px;color:#333">Date</div>
<div class="t " style="left:877px;top:240px;font-size:9.2px;letter-spacing:-0.2px;color:#333">Start ...</div>
<div class="t " style="left:915px;top:240px;font-size:9.2px;letter-spacing:-0.2px;color:#333">End ...</div>
<div class="t " style="left:953.5px;top:240px;font-size:9.2px;letter-spacing:-0.2px;color:#333">Desc...</div>
<div class="t " style="left:991.5px;top:240px;font-size:9.2px;letter-spacing:-0.2px;color:#333">Link...</div>
<div class="a" style="left:871.5px;top:236px;width:1px;height:20px;background:#e5e5e5"></div>
<div class="a" style="left:909.5px;top:236px;width:1px;height:20px;background:#e5e5e5"></div>
<div class="a" style="left:947.5px;top:236px;width:1px;height:20px;background:#e5e5e5"></div>
<div class="a" style="left:985.5px;top:236px;width:1px;height:20px;background:#e5e5e5"></div>
<div class="a" style="left:1023.5px;top:236px;width:1px;height:20px;background:#e5e5e5"></div>
<div class="a" style="left:833px;top:444px;width:204.5px;height:13.5px;background:#f8f8f8"></div>
<div class="a" style="left:847.5px;top:444px;width:123.5px;height:13px;background:#f0f0f0;border:1px solid #fff;border-right:1px solid #696969;border-bottom:1px solid #696969;box-shadow:inset -1px -1px 0 #a0a0a0"></div>
<div class="a" style="left:833px;top:444px;width:14px;height:13px;background:#f0f0f0;border:1px solid #fff;border-right:1px solid #696969;border-bottom:1px solid #696969"></div>
<div class="a" style="left:1023px;top:444px;width:14px;height:13px;background:#f0f0f0;border:1px solid #fff;border-right:1px solid #696969;border-bottom:1px solid #696969"></div>
<svg class="a" style="left:837.5px;top:447.5px" width="3.5" height="6" viewBox="0 0 4 7"><path d="M4 0 V7 L0 3.5Z" fill="#000"/></svg>
<svg class="a" style="left:1028.5px;top:447.5px" width="3.5" height="6" viewBox="0 0 4 7"><path d="M0 0 V7 L4 3.5Z" fill="#000"/></svg>
<div class="a" style="left:974px;top:211px;width:14.5px;height:16px;border:1px solid #d4dff6;border-radius:2.5px;background:linear-gradient(#e9f0fc,#d3e0f6)"></div>
<div class="a" style="left:990.5px;top:211px;width:14.5px;height:16px;border:1px solid #d4dff6;border-radius:2.5px;background:linear-gradient(#e9f0fc,#d3e0f6)"></div>
<div class="a" style="left:1007px;top:211px;width:14.5px;height:16px;border:1px solid #d4dff6;border-radius:2.5px;background:linear-gradient(#e9f0fc,#d3e0f6)"></div>
<div class="a" style="left:1023.5px;top:211px;width:14.5px;height:16px;border:1px solid #d4dff6;border-radius:2.5px;background:linear-gradient(#e9f0fc,#d3e0f6)"></div>
<svg class="a" style="left:976px;top:214px" width="11" height="11" viewBox="0 0 11 11"><rect x="0.5" y="0.5" width="10" height="10" fill="#f6fbff" stroke="#6fa5c8" stroke-width=".8"/><rect x="1" y="1" width="9" height="2.6" fill="#f0a24a"/><rect x="2" y="5" width="2" height="2" fill="#8fd0c8"/><rect x="5" y="5" width="2" height="2" fill="#4a9a5a"/><rect x="7.6" y="4.4" width="2" height="2" fill="#e06a3a"/><rect x="3.4" y="7.4" width="2" height="2" fill="#3a8a9a"/></svg>
<svg class="a" style="left:992px;top:214.5px" width="11.5" height="10" viewBox="0 0 11.5 10"><rect x="0.5" y="0.5" width="10.5" height="9" fill="#cfcfcf" stroke="#b4b4b4"/><rect x="0.5" y="0.5" width="10.5" height="1.8" fill="#bdbdbd"/><rect x="2" y="4.4" width="1.4" height="1.6" fill="#e8e8e8"/><rect x="4.2" y="4.6" width="5" height="1.2" fill="#dedede"/></svg>
<svg class="a" style="left:1008.3px;top:214.5px" width="11.96" height="9.200000000000001" viewBox="0 0 13 10"><path d="M3 0.9 Q4.6 -0.2 5.7 1 L6.1 3.3 Q6.5 3 6.9 3.3 L7.3 1 Q8.4 -0.2 10 0.9 L12.7 6 Q13.5 9.9 10 9.9 Q7.4 9.9 7.2 7 L5.8 7 Q5.6 9.9 3 9.9 Q-0.5 9.9 0.3 6Z" fill="#8c8c8c"/><ellipse cx="3.1" cy="7.6" rx="1.9" ry="1.3" fill="#b9b9b9"/><ellipse cx="9.9" cy="7.6" rx="1.9" ry="1.3" fill="#b9b9b9"/></svg>
<svg class="a" style="left:1025px;top:213.5px" width="11.5" height="12" viewBox="0 0 11.5 12"><path d="M1.6 5.2 A4.3 4.3 0 0 1 8.8 2.8" fill="none" stroke="#8f8f8f" stroke-width="2"/><path d="M7.2 0.6 L10.8 1.6 L8.6 4.8Z" fill="#8f8f8f"/><path d="M9.9 6.8 A4.3 4.3 0 0 1 2.7 9.2" fill="none" stroke="#8f8f8f" stroke-width="2"/><path d="M4.3 11.4 L0.7 10.4 L2.9 7.2Z" fill="#8f8f8f"/></svg>
<div class="bt" style="left:831.5px;top:469px;width:103px;height:21.5px;line-height:19.5px">Staff Assignments</div>
<div class="bt" style="left:937px;top:469px;width:102.5px;height:21.5px;line-height:19.5px">Insurance Auths</div>
<div class="bt" style="left:831.5px;top:495px;width:103px;height:21.5px;line-height:19.5px">Program Assignments</div>
<div class="bt" style="left:937px;top:495px;width:102.5px;height:21.5px;line-height:19.5px">Scheduling Groups</div>
<div class="bt" style="left:831.5px;top:523px;width:103px;height:22px;line-height:20px">Patient Portal Account</div>
<div class="bt" style="left:937px;top:523px;width:102.5px;height:22px;line-height:20px">Foster Home Placement</div>
<div class="bt" style="left:829px;top:553px;width:43px;height:34px;background:linear-gradient(#dde8fa 0%,#cfdef5 25%,#bdd2f0 45%,#c9dbf4 70%,#d6e4f8 100%);border-color:#a6badc;border-radius:3.5px"></div>
<div class="bt" style="left:890px;top:553px;width:43px;height:34px;background:linear-gradient(#dde8fa 0%,#cfdef5 25%,#bdd2f0 45%,#c9dbf4 70%,#d6e4f8 100%);border-color:#a6badc;border-radius:3.5px"></div>
<div class="bt" style="left:937px;top:553px;width:43px;height:34px;background:linear-gradient(#dde8fa 0%,#cfdef5 25%,#bdd2f0 45%,#c9dbf4 70%,#d6e4f8 100%);border-color:#a6badc;border-radius:3.5px"></div>
<div class="bt" style="left:996px;top:552px;width:43px;height:34px;background:linear-gradient(#dde8fa 0%,#cfdef5 25%,#bdd2f0 45%,#c9dbf4 70%,#d6e4f8 100%);border-color:#a6badc;border-radius:3.5px"></div>
<svg class="a" style="left:843.5px;top:562px" width="15.5" height="14.5" viewBox="0 0 15.5 14.5"><path d="M7 0.6 H11.6 L14.6 3.4 V10 H7Z" fill="#eef6fd" stroke="#9fbfdc" stroke-width=".8"/><circle cx="10.6" cy="4" r="1.8" fill="#cfe6f6"/><path d="M0.6 13.8 V5.6 H4.6 L5.6 6.8 H13.2 V13.8Z" fill="#f8dc8c" stroke="#dcb45a" stroke-width=".8"/><path d="M0.8 9 H13" stroke="#fdf0c0" stroke-width="1.6"/><path d="M5 6.4 H8" stroke="#d8452c" stroke-width="1"/></svg>
<svg class="a" style="left:905.5px;top:561px" width="14" height="15.5" viewBox="0 0 14 15.5"><path d="M8.2 0.6 H10.2 V2.4 H8.2Z M8.6 2.6 L7 5.6 M9.8 2.6 L11.2 5.6" fill="#c8d0c0" stroke="#66705c" stroke-width=".8"/><path d="M0.6 14.8 V5 H4.4 L5.4 6.2 H11 V14.8Z" fill="#d9a83a" stroke="#5e5230" stroke-width=".9"/><path d="M0.8 14.8 L3 8.4 H13.4 L11 14.8Z" fill="#f2c14e" stroke="#8a6a26" stroke-width=".7"/></svg>
<svg class="a" style="left:951.5px;top:562px" width="14" height="14" viewBox="0 0 14 14"><path d="M4.6 0.8 L6 2 L7 0.4 L8 2 L9.4 0.8 L8.6 3.8 H5.4Z" fill="#136a1c"/><path d="M5.2 3.8 H8.8 Q13.4 7 13.4 11 Q13.4 13.6 10.6 13.6 H3.4 Q0.6 13.6 0.6 11 Q0.6 7 5.2 3.8Z" fill="#1e9b2a"/><rect x="4.8" y="3.6" width="4.4" height="1.2" fill="#0f5a18"/></svg>
<div class="t" style="left:955.3px;top:566.5px;font-size:7.5px;line-height:8px;font-weight:bold;color:#d6f5c8">$</div>
<svg class="a" style="left:1010.5px;top:561.5px" width="14.5" height="14" viewBox="0 0 14.5 14"><g stroke-linecap="round"><path d="M1.2 1 L5.2 5" stroke="#e8eef0" stroke-width="2.6"/><path d="M1.2 1 L5.2 5" stroke="#4a5a60" stroke-width=".7" fill="none"/><path d="M13.2 1 L9.4 4.8" stroke="#4faa6c" stroke-width="2.4"/><path d="M13.4 0.8 L10.6 1.2 L13 3.6Z" fill="#2f8a4c"/><path d="M1.4 13 L5.4 9" stroke="#3c5a56" stroke-width="2.2"/><path d="M6.4 8 L3.4 8.6 L5.8 11Z" fill="#2c4642"/><path d="M13.2 13 L9.2 9" stroke="#15211f" stroke-width="2.2"/><path d="M8.2 8 L11.2 8.6 L8.8 11Z" fill="#15211f"/></g></svg>
<div class="a" style="left:2px;top:594px;width:493px;height:18px;border-top:1px solid #6a6a6a;border-left:1px solid #6a6a6a;background:#f0f0f0"></div>
<div class="a" style="left:497px;top:594px;width:328px;height:18px;border-top:1px solid #6a6a6a;border-left:1px solid #6a6a6a;background:#f0f0f0"></div>
<div class="a" style="left:0;top:612px;width:1049px;height:1px;background:#a6a6a6"></div>
<div class="a" style="left:0;top:613px;width:1050px;height:1px;background:#fcfcfc"></div>
<div class="a" style="left:1048px;top:0;width:1px;height:612px;background:#9c9c9c"></div>
<div class="a" style="left:1049px;top:0;width:1px;height:614px;background:#fdfdfd"></div>
</body></html>
